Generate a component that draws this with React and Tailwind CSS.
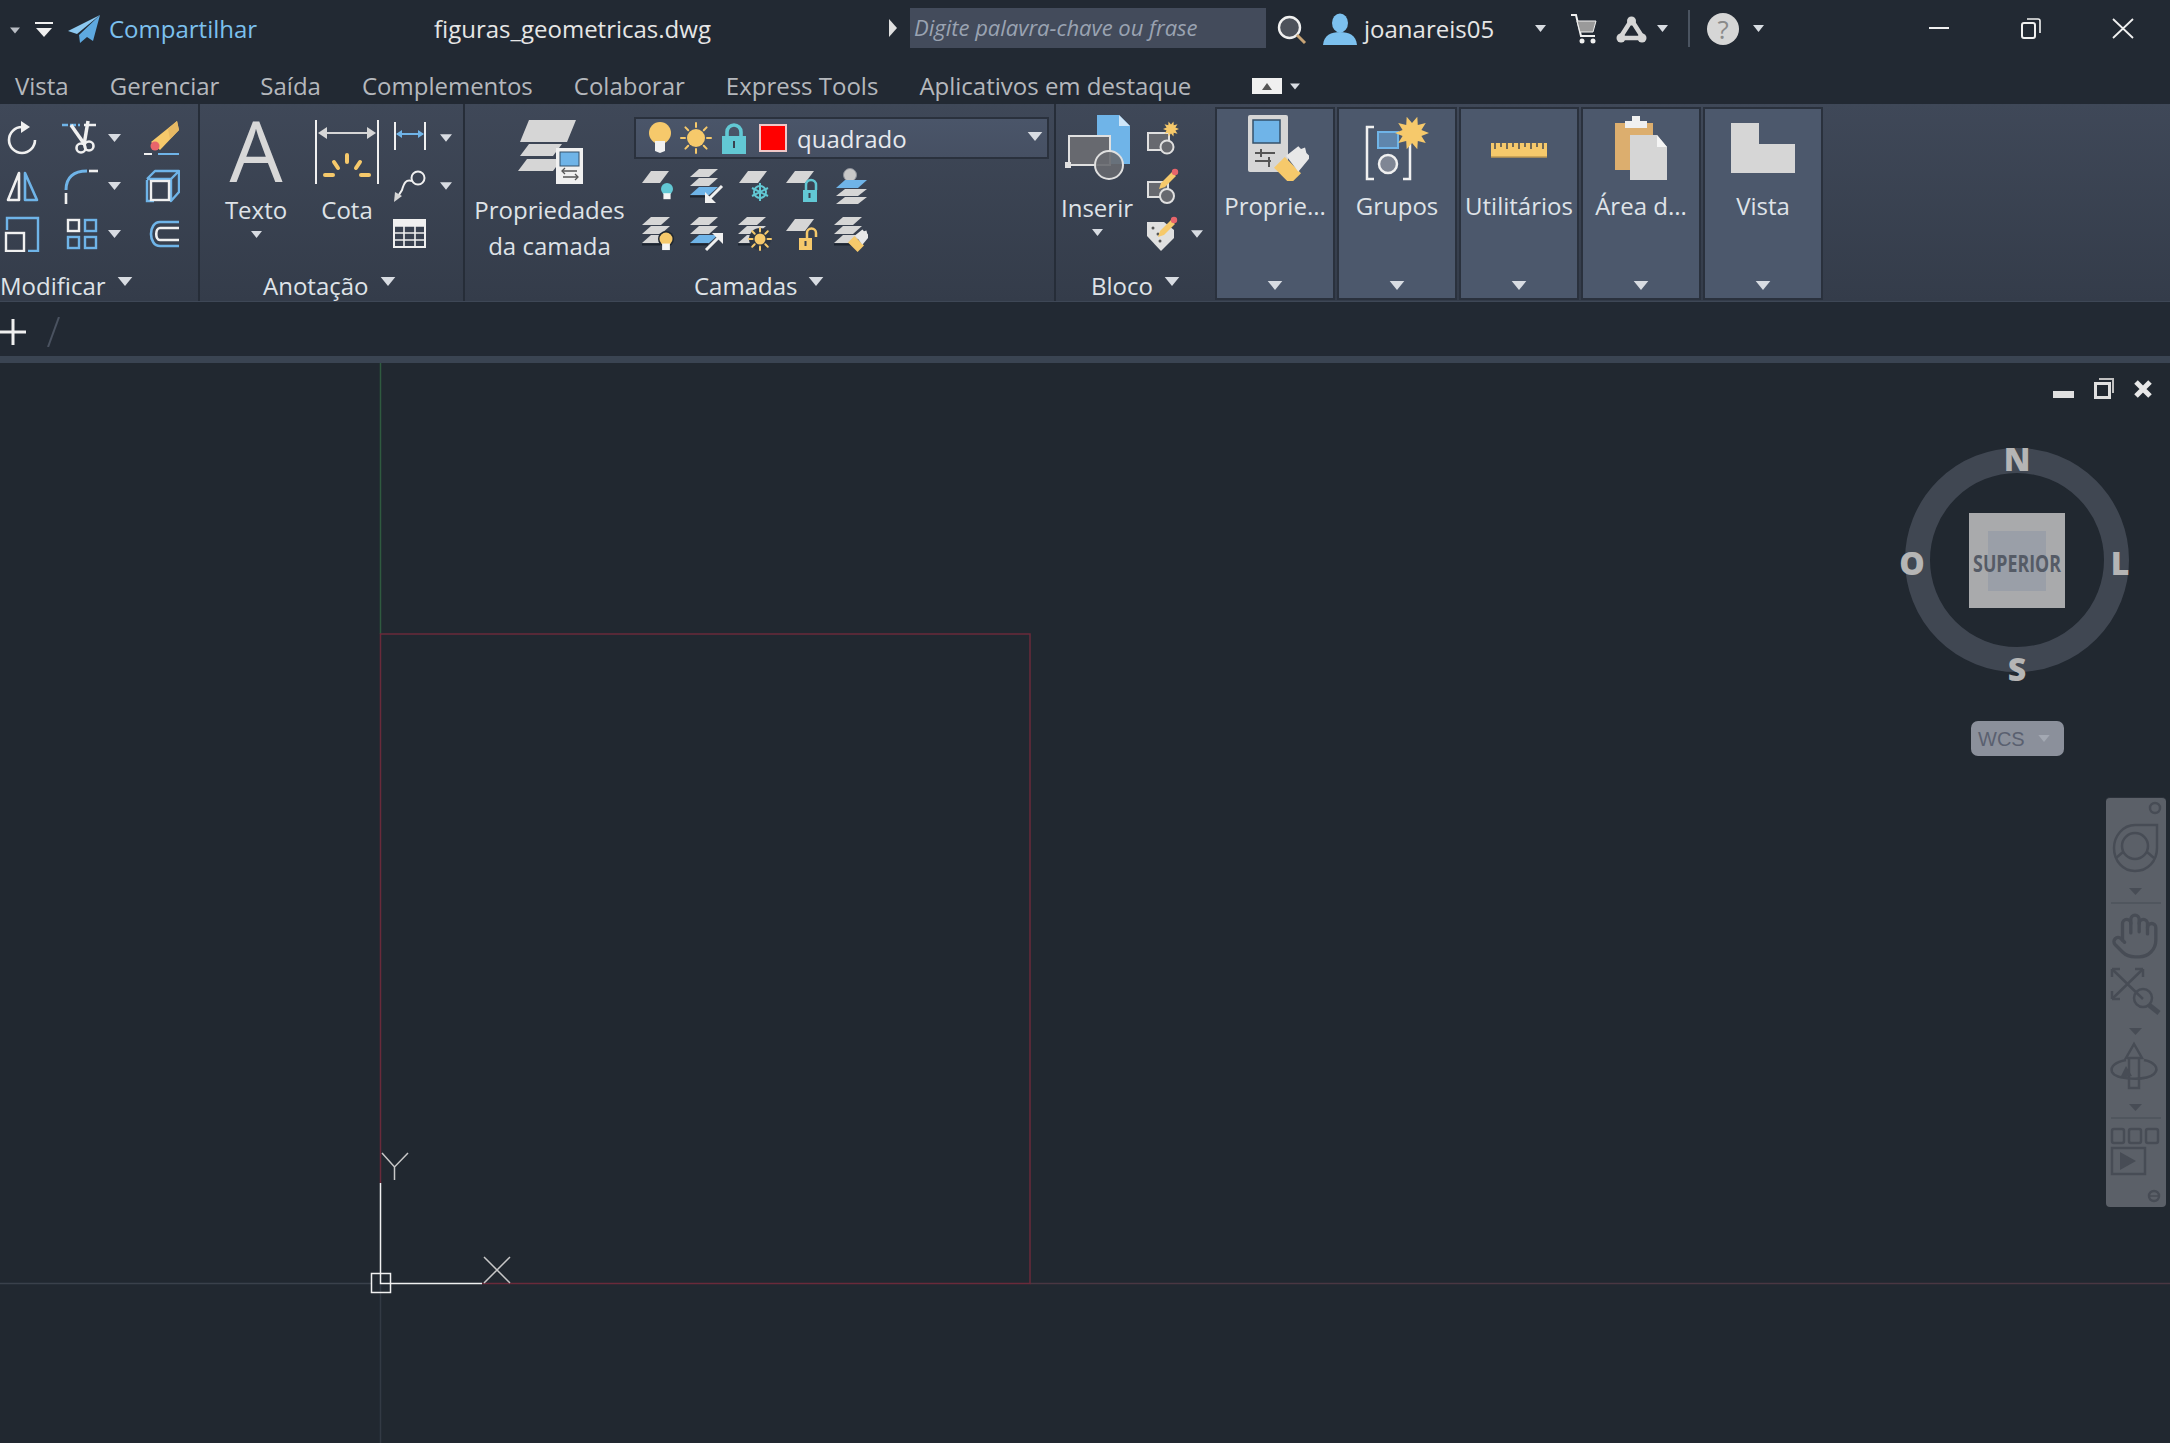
import React from 'react';
import { Hand } from 'lucide-react';

const W = '#f0f0f0', B = '#6fb4e8', G = '#d6d6d6', Y = '#f6c96b', T = '#62c8d4';

const Sv = ({ w = 36, h = w, children }) => (
  <svg width={w} height={h} viewBox={`0 0 ${w} ${h}`} fill="none" className="block shrink-0">{children}</svg>
);
const Caret = ({ w = 13, h = 8, c = '#d8dce2' }) => (
  <svg width={w} height={h} viewBox="0 0 13 8" className="block shrink-0"><path d="M0 0H13L6.5 8Z" fill={c} /></svg>
);
const Plane = ({ x = 0, y = 0, w = 26, h = 11, f = G }) => (
  <path d={`M${x + 9} ${y}H${x + w}L${x + w - 9} ${y + h}H${x}Z`} fill={f} />
);
const Stack = ({ x = 2, blue = false }) => (
  <g>
    <Plane x={x} y={1} w={28} h={8} />
    <Plane x={x} y={10} w={28} h={8} />
    <Plane x={x} y={19} w={28} h={8} f={blue ? B : G} />
    <path d={`M${x} 28.5H${x + 18}`} stroke="#1d2530" strokeWidth="2" />
  </g>
);
const Bulb = ({ x, y, r = 6, f = T }) => (
  <g>
    <circle cx={x} cy={y} r={r} fill={f} />
    <path d={`M${x - r * 0.6} ${y + r * 0.7}H${x + r * 0.6}V${y + r * 1.7}H${x - r * 0.6}Z`} fill="#f4f4f4" />
  </g>
);
const Lock = ({ x, y, f = T, open = false }) => (
  <g>
    <path d={open ? `M${x + 8} ${y}V${y - 5}a4.5 4.5 0 0 1 9 0V${y - 1}` : `M${x + 3} ${y}V${y - 5}a5 5 0 0 1 10 0V${y}`} stroke={f} strokeWidth="2.5" fill="none" />
    <rect x={x} y={y} width={open ? 13 : 14} height={12} fill={f} />
    <rect x={x + 5.5} y={y + 3} width={2} height={5} fill="#39414f" />
  </g>
);
const Sun = ({ x, y, r = 7, rays = 11 }) => (
  <g stroke={Y} strokeWidth="2" strokeLinecap="round">
    {[0, 45, 90, 135, 180, 225, 270, 315].map((a) => {
      const c = Math.cos((a * Math.PI) / 180), s = Math.sin((a * Math.PI) / 180);
      return <line key={a} x1={x + c * (r + 2)} y1={y + s * (r + 2)} x2={x + c * rays} y2={y + s * rays} />;
    })}
    <circle cx={x} cy={y} r={r} fill={Y} stroke="none" />
  </g>
);
const Brush = ({ x = 0, y = 0, s = 1 }) => (
  <g transform={`translate(${x} ${y}) scale(${s})`}>
    <path d="M0 8L8 0L20 12L12 20Z" fill={Y} />
    <path d="M9 -1L18 -8L20 -6L23 -7L24 -3L27 0L18 11Z" fill="#e8e8e8" />
  </g>
);
const Pencil = ({ x = 0, y = 0 }) => (
  <g transform={`translate(${x} ${y})`}>
    <path d="M0 14L11 3L15 7L4 18L-2 20Z" fill={Y} />
    <circle cx="14" cy="3" r="3.2" fill="#e8656b" />
  </g>
);
const Burst = ({ x, y, r = 16, f = Y }) => {
  const pts = [];
  for (let i = 0; i < 20; i++) {
    const a = (i * Math.PI) / 10, q = i % 2 ? r * 0.58 : r;
    pts.push(`${(x + Math.cos(a) * q).toFixed(1)},${(y + Math.sin(a) * q).toFixed(1)}`);
  }
  return <polygon points={pts.join(' ')} fill={f} />;
};

/* Modificar */
const IRotate = () => (
  <Sv><path d="M18 7A13 13 0 1 0 31 20" stroke={W} strokeWidth="2.6" /><path d="M17 1L26 7L17 13Z" fill={W} /></Sv>
);
const ITrim = () => (
  <Sv>
    <path d="M0 5H18" stroke={B} strokeWidth="2.5" strokeDasharray="6 2" /><path d="M22 5H34" stroke={W} strokeWidth="2.5" />
    <path d="M9 5L23 25" stroke={W} strokeWidth="3.5" /><path d="M26 1L22 25" stroke={W} strokeWidth="3.5" />
    <circle cx="19" cy="28" r="4.5" stroke={W} strokeWidth="2.6" /><circle cx="27" cy="26" r="4.5" stroke={W} strokeWidth="2.6" />
  </Sv>
);
const IErase = () => (
  <Sv>
    <path d="M33 1L35 10L16 30L7 22Z" fill={Y} /><path d="M33 1L35 10L26 19L24 9Z" fill="#e7b964" />
    <circle cx="11" cy="26" r="4.5" fill="#e8656b" />
    <path d="M0 34H8" stroke={W} strokeWidth="2" /><path d="M14 34H35" stroke={B} strokeWidth="2" />
  </Sv>
);
const IMirror = () => (
  <Sv><path d="M15 5V32H4Z" stroke={W} strokeWidth="2.6" strokeLinejoin="round" /><path d="M21 5V32H33Z" stroke={B} strokeWidth="2.6" strokeLinejoin="round" /></Sv>
);
const IFillet = () => (
  <Sv><path d="M4 22C4 9 12 3 25 3" stroke={B} strokeWidth="3" /><path d="M27 3H36" stroke={W} strokeWidth="2.6" /><path d="M4 25V36" stroke={W} strokeWidth="2.6" /></Sv>
);
const IBox = () => (
  <Sv>
    <path d="M3 12V33H10" stroke={B} strokeWidth="2.4" /><path d="M3 11L11 3H35V24L27 33V11H3M27 11L35 3" stroke={B} strokeWidth="2.4" strokeLinejoin="round" />
    <rect x="7" y="13" width="18" height="19" stroke={W} strokeWidth="2.4" />
  </Sv>
);
const IScale = () => (
  <Sv>
    <path d="M3 14V2H34V35H24" stroke={B} strokeWidth="2.4" />
    <rect x="2" y="17" width="18" height="18" stroke={W} strokeWidth="2.4" />
  </Sv>
);
const IArray = () => (
  <Sv>
    <rect x="6" y="4" width="11" height="11" stroke={W} strokeWidth="2.4" /><rect x="23" y="4" width="11" height="11" stroke={B} strokeWidth="2.4" />
    <rect x="6" y="21" width="11" height="11" stroke={B} strokeWidth="2.4" /><rect x="23" y="21" width="11" height="11" stroke={B} strokeWidth="2.4" />
  </Sv>
);
const IOffset = () => (
  <Sv>
    <path d="M35 6H16C4 6 4 30 16 30H35" stroke={B} strokeWidth="2.6" />
    <path d="M35 12H16C11 12 11 24 16 24H35" stroke={W} strokeWidth="2.6" />
  </Sv>
);

/* Anotação */
const ICota = () => (
  <Sv w={64} h={68}>
    <path d="M1 4V68M63 4V68" stroke={W} strokeWidth="2" />
    <path d="M5 17H59" stroke={G} strokeWidth="2.2" /><path d="M3 17L12 11V23Z" fill={G} /><path d="M61 17L52 11V23Z" fill={G} />
    <g stroke={Y} strokeWidth="4" strokeLinecap="round">
      <path d="M32 39V46" /><path d="M19 46L23 52" /><path d="M45 46L41 52" /><path d="M10 59H18" /><path d="M54 59H46" />
    </g>
  </Sv>
);
const IDim = () => (
  <Sv><path d="M3 2V30M33 2V30" stroke={W} strokeWidth="2" /><path d="M5 14H31" stroke={B} strokeWidth="2" /><path d="M4 14L10 10V18Z" fill={B} /><path d="M32 14L26 10V18Z" fill={B} /></Sv>
);
const ILeader = () => (
  <Sv><circle cx="26" cy="10" r="6.5" stroke={W} strokeWidth="2" /><path d="M20 13C14 11 12 15 10 22L5 30" stroke={W} strokeWidth="2" /><path d="M2 34L3 24L10 28Z" fill={G} /></Sv>
);
const ITable = () => (
  <Sv><rect x="2" y="4" width="31" height="27" stroke={W} strokeWidth="2" /><path d="M2 10H33M2 17H33M2 24H33M12 10V31M23 10V31" stroke={W} strokeWidth="1.6" /><path d="M2 4H33V10H2Z" fill={W} /></Sv>
);
const IProps = () => (
  <Sv w={68} h={68}>
    <Plane x={4} y={4} w={56} h={22} />
    <Plane x={4} y={28} w={42} h={12} />
    <Plane x={2} y={43} w={44} h={12} />
    <rect x="40" y="32" width="27" height="36" fill="#f0f0f0" />
    <rect x="44" y="36" width="19" height="14" fill={B} stroke="#34506a" strokeWidth="1" />
    <path d="M47 55H61M47 61H61" stroke="#555" strokeWidth="1.6" /><path d="M49 52L46 55L49 58M59 58L62 61L59 64" stroke="#555" strokeWidth="1.3" fill="none" />
  </Sv>
);

/* Camadas */
const L = {
  a: () => <Sv><Plane x={2} y={3} w={27} h={12} /><Bulb x={27} y={21} /></Sv>,
  b: () => <Sv><Stack x={2} blue /><path d="M34 18L20 32" stroke={W} strokeWidth="3" /><path d="M17 35V24L28 35Z" fill={W} /></Sv>,
  c: () => <Sv><Plane x={3} y={3} w={28} h={12} /><g stroke={T} strokeWidth="2"><circle cx="24" cy="24" r="6" /><path d="M24 15V33M16 20L32 28M16 28L32 20" /></g></Sv>,
  d: () => <Sv><Plane x={2} y={3} w={28} h={12} /><Lock x={19} y={22} /></Sv>,
  e: () => <Sv><circle cx="18" cy="7" r="6.5" fill="#c8c8c8" stroke="#8a8f98" /><Plane x={4} y={12} w={31} h={8} f={B} /><Plane x={4} y={21} w={31} h={7} /><Plane x={4} y={29} w={31} h={7} /></Sv>,
  f: () => <Sv><Stack x={2} /><circle cx="26" cy="23" r="8" fill="#1f2630" /><Bulb x={26} y={23} r={6.5} f={Y} /></Sv>,
  g: () => <Sv><Stack x={2} blue /><path d="M18 34L31 21" stroke={W} strokeWidth="3" /><path d="M35 17V28L24 17Z" fill={W} /></Sv>,
  h: () => <Sv><Stack x={2} /><circle cx="24" cy="23" r="11" fill="#2e3642" /><Sun x={24} y={23} r={5.5} rays={11} /></Sv>,
  i: () => <Sv><Plane x={2} y={3} w={28} h={12} /><Lock x={15} y={22} f={Y} open /></Sv>,
  j: () => <Sv><Stack x={2} /><Brush x={16} y={20} s={0.8} /></Sv>,
};

/* Bloco */
const IInsert = () => (
  <Sv w={72} h={72}>
    <path d="M36 3H58L69 14V52H36Z" fill={B} /><path d="M58 3L69 14H58Z" fill="#cfe6f8" />
    <rect x="8" y="24" width="41" height="29" fill="#67696f" stroke="#e0e0e0" strokeWidth="2" />
    <circle cx="48" cy="53" r="14" fill="#67696f" fillOpacity="0.9" stroke="#e0e0e0" strokeWidth="2" />
    <rect x="4" y="50" width="6" height="6" fill="#e0e0e0" />
  </Sv>
);
const IB1 = () => (
  <Sv><rect x="4" y="13" width="21" height="17" fill="#67696f" stroke="#e0e0e0" strokeWidth="2" /><circle cx="23" cy="27" r="6.5" fill="#67696f" stroke="#e0e0e0" strokeWidth="2" /><Burst x={27} y={9} r={8} /></Sv>
);
const IB2 = () => (
  <Sv><rect x="4" y="14" width="20" height="15" fill="#67696f" stroke="#e0e0e0" strokeWidth="2" /><circle cx="23" cy="28" r="7" fill="#67696f" stroke="#e0e0e0" strokeWidth="2" /><Pencil x={17} y={1} /></Sv>
);
const IB3 = () => (
  <Sv><path d="M3 6H20L30 14V22L17 35L3 20Z" fill="#e0e0e0" /><circle cx="9" cy="12" r="1.5" fill="#555" /><circle cx="14" cy="18" r="1.5" fill="#555" /><circle cx="16" cy="25" r="1.5" fill="#555" /><Pencil x={16} y={1} /></Sv>
);

/* slide-outs */
const SProps = () => (
  <Sv w={68} h={68}>
    <rect x="7" y="2" width="40" height="57" rx="2" fill={G} />
    <rect x="12" y="7" width="27" height="23" fill={B} stroke="#34506a" strokeWidth="1.5" />
    <path d="M14 40H34M14 48H30M20 36V44M28 44V54" stroke="#555" strokeWidth="2" />
    <Brush x={33} y={44} s={1.35} />
  </Sv>
);
const SGroups = () => (
  <Sv w={68} h={68}>
    <path d="M11 14H4V66H11M40 66H47V14" stroke={W} strokeWidth="2.5" />
    <rect x="15" y="19" width="20" height="16" fill="#5f86ad" stroke={B} strokeWidth="2" />
    <circle cx="25" cy="51" r="9" fill="#7f8694" stroke={W} strokeWidth="2.5" />
    <Burst x={49} y={20} r={17} />
  </Sv>
);
const SRuler = () => (
  <Sv w={68} h={68}>
    <path d="M6 30V44H62V30Z" fill={Y} />
    <path d="M10 30V36M16 30V34M22 30V36M28 30V34M34 30V36M40 30V34M46 30V36M52 30V34M58 30V36" stroke="#39414f" strokeWidth="1.4" />
    <path d="M6 44H62" stroke="#bf9950" strokeWidth="1.5" />
  </Sv>
);
const SClip = () => (
  <Sv w={68} h={68}>
    <rect x="8" y="10" width="38" height="47" fill="#dcae6e" />
    <rect x="18" y="8" width="22" height="7" fill="#f0f0f0" /><rect x="25" y="3" width="8" height="6" fill="#f0f0f0" />
    <path d="M23 22H50L60 34V67H23Z" fill={G} /><path d="M50 22L60 34H50Z" fill="#f4f4f4" />
  </Sv>
);
const SView = () => (
  <Sv w={68} h={68}><path d="M2 10H30V31H66V60H2Z" fill={G} /></Sv>
);

const Big = ({ label, icon, caret, top = 'pt-[12px]', mt = 'mt-[11px]', className = '', lh = 'leading-[30px]' }) => (
  <div className={`flex flex-col items-center ${top} ${className}`}>
    {icon}
    <div className={`${mt} ${lh} text-center whitespace-nowrap text-[#dfe3e8]`}>{label}</div>
    {caret && <div className="mt-[6px]"><Caret w={11} h={7} /></div>}
  </div>
);

const Footer = ({ name, ml }) => (
  <div className={`h-[30px] pb-[1px] flex items-center ${ml}`}>
    <span className="whitespace-nowrap text-[#dfe3e8]">{name}</span>
    <span className="ml-[11px] mb-[8px]"><Caret w={16} h={9} /></span>
  </div>
);

const Slide = ({ label, icon }) => (
  <div className="w-[120px] mt-[3px] mb-[1px] border-2 border-[#2a313d] bg-[#4c586c] flex flex-col items-center pt-[4px]">
    {icon}
    <div className="mt-[10px] leading-[30px] whitespace-nowrap text-[#dfe3e8]">{label}</div>
    <div className="mt-auto mb-[8px]"><Caret w={16} h={9} /></div>
  </div>
);

const Row3 = ({ a, b, c }) => (
  <div className="h-[48px] flex items-center">
    <div className="ml-[4px]">{a}</div>
    <div className="ml-[22px]">{b}</div>
    <div className="ml-[10px]"><Caret /></div>
    <div className="ml-[23px]">{c}</div>
  </div>
);

const Menu = ['Vista', 'Gerenciar', 'Saída', 'Complementos', 'Colaborar', 'Express Tools', 'Aplicativos em destaque'];

export default function App() {
  return (
    <div className="w-[2170px] h-[1443px] overflow-hidden relative bg-[#212830] flex flex-col font-['Open_Sans',sans-serif] text-[24px]">
      {/* title bar */}
      <div className="h-[60px] shrink-0 bg-[#222933] flex items-center">
        <div className="ml-[10px]"><Caret w={10} h={7} c="#b9bdc4" /></div>
        <div className="ml-[15px]">
          <Sv w={18} h={16}><path d="M0 1H18" stroke={W} strokeWidth="2" /><path d="M1 6H17L9 15Z" fill={W} /></Sv>
        </div>
        <div className="ml-[15px]">
          <Sv w={32} h={30}><path d="M32 0L0 16L9 19Z" fill="#8cc8f0" /><path d="M32 0L11 20L12 28L19 22L25 26Z" fill="#5ea9e0" /></Sv>
        </div>
        <span className="ml-[9px] w-[149px] -mt-[2px] whitespace-nowrap text-[#7cc0ee]">Compartilhar</span>
        <span className="ml-[176px] w-[281px] -mt-[2px] whitespace-nowrap text-[#e6e6e6]">figuras_geometricas.dwg</span>
        <div className="ml-[173px] -mt-[4px]"><Sv w={10} h={18}><path d="M1 0L9 9L1 18Z" fill="#e0e0e0" /></Sv></div>
        <div className="ml-[12px] -mt-[4px] w-[356px] h-[40px] bg-[#434b5b] flex items-center pl-[4px]">
          <span className="italic text-[22px] -mt-[2px] text-[#9aa3b2] whitespace-nowrap">Digite palavra-chave ou frase</span>
        </div>
        <div className="ml-[11px]">
          <Sv w={30} h={30}><circle cx="12.5" cy="12.5" r="10.5" fill="#4d525b" stroke={W} strokeWidth="2.4" /><path d="M20 20L28 28" stroke="#c8a476" strokeWidth="3" /></Sv>
        </div>
        <div className="ml-[16px] -mt-[2px]">
          <Sv w={34} h={32}><ellipse cx="17" cy="10" rx="8" ry="9.5" fill="#7cc0ee" /><path d="M0 32C1 22 8 19 17 19C26 19 33 22 34 32Z" fill="#7cc0ee" /></Sv>
        </div>
        <span className="ml-[7px] w-[132px] -mt-[2px] whitespace-nowrap text-[#e6e6e6]">joanareis05</span>
        <div className="ml-[39px] -mt-[4px]"><Caret w={11} h={7} /></div>
        <div className="ml-[25px] -mt-[2px]">
          <Sv w={26} h={30}><path d="M0 1H5L10 22H24" stroke={W} strokeWidth="2" /><path d="M6 7H25L22 18H9Z" fill="#9a9a9a" stroke={W} strokeWidth="1" /><circle cx="11" cy="27" r="2.5" fill={W} /><circle cx="22" cy="27" r="2.5" fill={W} /></Sv>
        </div>
        <div className="ml-[19px] -mt-[2px]">
          <Sv w={31} h={28}><path d="M15.5 5L27 23H4Z" stroke={G} strokeWidth="4.5" strokeLinejoin="round" /><circle cx="15.5" cy="6" r="4.5" fill={G} /><circle cx="5" cy="23" r="4.5" fill={G} /><circle cx="26" cy="23" r="4.5" fill={G} /></Sv>
        </div>
        <div className="ml-[10px] -mt-[4px]"><Caret w={11} h={7} /></div>
        <div className="ml-[20px] -mt-[4px] w-[2px] h-[37px] bg-[#4b5461]" />
        <div className="ml-[17px] -mt-[2px] w-[32px] h-[32px] rounded-full bg-[#d6d6d6] flex items-center justify-center text-[26px] leading-none text-[#8a8a8a]">?</div>
        <div className="ml-[14px] -mt-[4px]"><Caret w={11} h={7} /></div>
        <div className="ml-[165px] -mt-[4px] w-[20px] h-[2px] bg-[#f0f0f0]" />
        <div className="ml-[72px] -mt-[4px]">
          <Sv w={20} h={21}><rect x="1" y="5" width="13" height="15" rx="2" stroke={W} strokeWidth="2" /><path d="M6 1H17C18 1 19 2 19 3V15" stroke={W} strokeWidth="1.6" /></Sv>
        </div>
        <div className="ml-[71px] -mt-[4px]">
          <Sv w={22} h={21}><path d="M1 1L21 20M21 1L1 20" stroke={W} strokeWidth="1.8" /></Sv>
        </div>
      </div>

      {/* tabs */}
      <div className="h-[44px] shrink-0 bg-[#222933] pt-[8px] pl-[15px] flex items-center gap-[41px] text-[#b5b8bd] whitespace-nowrap">
        {Menu.map((m) => <span key={m}>{m}</span>)}
        <div className="ml-[20px] flex items-center">
          <div className="w-[30px] h-[16px] bg-[#f0f0f0] flex items-center justify-center"><svg width="10" height="7" viewBox="0 0 10 7"><path d="M5 0L10 7H0Z" fill="#555" /></svg></div>
          <div className="ml-[8px]"><Caret w={10} h={7} /></div>
        </div>
      </div>

      {/* ribbon */}
      <div className="h-[198px] shrink-0 flex bg-linear-to-b from-[#3f4858] to-[#343c4a] border-b border-[#3e4756]">
        {/* Modificar */}
        <div className="w-[200px] shrink-0 border-r-2 border-[#262d38] flex flex-col">
          <div className="h-[168px] pt-[10px]">
            <Row3 a={<IRotate />} b={<ITrim />} c={<IErase />} />
            <Row3 a={<IMirror />} b={<IFillet />} c={<IBox />} />
            <Row3 a={<IScale />} b={<IArray />} c={<IOffset />} />
          </div>
          <Footer name="Modificar" ml="ml-0" />
        </div>
        {/* Anotação */}
        <div className="w-[265px] shrink-0 border-r-2 border-[#262d38] flex flex-col">
          <div className="h-[168px] flex">
            <Big className="w-[102px] ml-[5px]" caret label="Texto" icon={<span className="block h-[68px] text-[84px] leading-[68px] font-medium text-[#d8d8d8]">A</span>} />
            <Big className="w-[80px]" label="Cota" icon={<ICota />} />
            <div className="ml-[5px] pt-[10px]">
              <div className="h-[48px] flex items-center"><IDim /><div className="ml-[12px]"><Caret w={12} h={8} /></div></div>
              <div className="h-[48px] flex items-center"><ILeader /><div className="ml-[12px]"><Caret w={12} h={8} /></div></div>
              <div className="h-[48px] flex items-center"><ITable /></div>
            </div>
          </div>
          <Footer name="Anotação" ml="ml-[63px]" />
        </div>
        {/* Camadas */}
        <div className="w-[591px] shrink-0 border-r-2 border-[#262d38] flex flex-col">
          <div className="h-[168px] flex">
            <Big className="w-[169px]" label={<>Propriedades<br />da camada</>} mt="mt-[8px]" lh="leading-[36px]" icon={<IProps />} />
            <div className="w-[415px] pt-[13px]">
              <div className="h-[42px] bg-linear-to-b from-[#4a5569] to-[#465063] border-2 border-[#2a313d] flex items-center">
                <div className="ml-[12px]"><Sv w={24} h={32}><circle cx="12" cy="11" r="11" fill={Y} /><path d="M7 19H17V29L12 31L7 29Z" fill="#f0f0f0" /></Sv></div>
                <div className="ml-[8px]"><Sv w={32} h={32}><Sun x={16} y={16} r={9} rays={15} /></Sv></div>
                <div className="ml-[10px]"><Sv w={24} h={32}><path d="M5 15V10a7 7 0 0 1 14 0V15" stroke={T} strokeWidth="3.6" fill="none" /><rect x="0" y="14" width="24" height="18" fill={T} /><rect x="11" y="19" width="2" height="7" fill="#39414f" /></Sv></div>
                <div className="ml-[13px] w-[28px] h-[28px] bg-[#ff0000] border-2 border-[#f0c8c8]" />
                <span className="ml-[10px] mt-[2px] text-[#e6e9ee] whitespace-nowrap">quadrado</span>
                <div className="ml-auto mr-[4px] -mt-[4px]"><Caret w={16} h={9} /></div>
              </div>
              <div className="mt-[3px] grid grid-cols-[repeat(5,48px)] grid-rows-[48px_48px] place-items-center">
                <L.a /><L.b /><L.c /><L.d /><L.e />
                <L.f /><L.g /><L.h /><L.i /><L.j />
              </div>
            </div>
          </div>
          <Footer name="Camadas" ml="ml-[229px]" />
        </div>
        {/* Bloco */}
        <div className="w-[159px] shrink-0 flex flex-col">
          <div className="h-[168px] flex">
            <Big className="w-[74px] ml-[4px]" caret top="pt-[8px]" mt="mt-[9px]" label="Inserir" icon={<IInsert />} />
            <div className="ml-[10px] pt-[10px]">
              <div className="h-[48px] flex items-center"><IB1 /></div>
              <div className="h-[48px] flex items-center"><IB2 /></div>
              <div className="h-[48px] flex items-center"><IB3 /><div className="ml-[11px]"><Caret w={12} h={8} /></div></div>
            </div>
          </div>
          <Footer name="Bloco" ml="ml-[35px]" />
        </div>
        {/* slide-outs */}
        <div className="flex gap-[2px] h-full">
          <Slide label="Proprie..." icon={<SProps />} />
          <Slide label="Grupos" icon={<SGroups />} />
          <Slide label="Utilitários" icon={<SRuler />} />
          <Slide label="Área d..." icon={<SClip />} />
          <Slide label="Vista" icon={<SView />} />
        </div>
      </div>

      {/* file tab bar */}
      <div className="h-[54px] shrink-0 bg-[#222933] flex items-center pt-[6px]">
        <Sv w={28} h={30}><path d="M0 15H26M13 2V28" stroke={W} strokeWidth="3" /></Sv>
        <div className="ml-[18px]"><Sv w={14} h={30}><path d="M13 0L2 30" stroke="#4a5260" strokeWidth="2" /></Sv></div>
      </div>
      <div className="h-[7px] shrink-0 bg-[#3a4452]" />

      {/* drawing canvas */}
      <div className="relative flex-1 bg-[#212830]">
        <svg width="2170" height="1080" viewBox="0 0 2170 1080" fill="none" className="absolute inset-0 block">
          <path d="M380.5 0V271" stroke="#2f5a3f" strokeWidth="1.5" />
          <path d="M380.5 920V1080" stroke="#333a44" strokeWidth="1.5" />
          <path d="M0 920.5H372" stroke="#3a414b" strokeWidth="1.5" />
          <path d="M1030 920.5H2170" stroke="#4a3742" strokeWidth="1.5" />
          <path d="M380.5 820V271H1030V920.5H482" stroke="#6a2a3a" strokeWidth="1.5" />
          <path d="M380.5 820V920.5H482" stroke={W} strokeWidth="1.5" />
          <rect x="371.5" y="910.5" width="19" height="19" stroke={W} strokeWidth="1.5" />
          <path d="M382 790L394.5 804L408 790M394.5 804V817" stroke="#c8c8c8" strokeWidth="1.5" />
          <path d="M484 894L510 920M510 894L484 920" stroke="#c8c8c8" strokeWidth="1.5" />
        </svg>

        {/* viewport controls */}
        <div className="absolute left-[2053px] top-[15px] flex items-center">
          <div className="w-[21px] h-[7px] mt-[12px] bg-[#e0e0e0]" />
          <div className="ml-[20px]"><Sv w={20} h={21}><rect x="1.5" y="5.5" width="14" height="14" stroke="#e0e0e0" strokeWidth="3" /><path d="M5 1H19V15" stroke="#c0c0c0" strokeWidth="2" /></Sv></div>
          <div className="ml-[19px]"><Sv w={20} h={20}><path d="M3 3L17 17M17 3L3 17" stroke="#e8e8e8" strokeWidth="5" /></Sv></div>
        </div>

        {/* view cube */}
        <div className="absolute left-[1905px] top-[85px] w-[224px] h-[224px] rounded-full border-[25px] border-[#404752]" />
        <div className="absolute left-[1969px] top-[150px] w-[96px] h-[95px] bg-[#a9aaac] flex items-center justify-center">
          <div className="w-[58px] h-[60px] bg-[#9a9fa8]" />
        </div>
        <span className="absolute left-[1969px] top-[150px] w-[96px] h-[95px] pt-[4px] flex items-center justify-center font-bold text-[24px] scale-x-[0.74] text-[#555b66] whitespace-nowrap">SUPERIOR</span>
        <span className="absolute left-[1997px] top-[76px] w-[40px] text-center font-extrabold text-[32px] leading-[40px] text-[#b5b5b5]">N</span>
        <span className="absolute left-[1997px] top-[286px] w-[40px] text-center font-extrabold text-[32px] leading-[40px] text-[#b5b5b5]">S</span>
        <span className="absolute left-[1892px] top-[180px] w-[40px] text-center font-extrabold text-[32px] leading-[40px] text-[#b5b5b5]">O</span>
        <span className="absolute left-[2100px] top-[180px] w-[40px] text-center font-extrabold text-[32px] leading-[40px] text-[#b5b5b5]">L</span>
        <div className="absolute left-[1971px] top-[358px] w-[93px] h-[35px] rounded-[7px] bg-[#8b909b] flex items-center pl-[7px]">
          <span className="font-['Liberation_Sans'] text-[20px] text-[#5a6070]">WCS</span>
          <div className="ml-[12px]"><Caret w={14} h={7} c="#a3a8b2" /></div>
        </div>

        {/* navigation bar */}
        <div className="absolute left-[2106px] top-[434px] w-[60px] h-[410px] rounded-[4px] bg-[#5b6068] border-t border-[#2b313a]">
          <svg width="60" height="410" viewBox="0 0 60 410" fill="none" className="absolute inset-0" stroke="#474c55" strokeWidth="2.5">
            <circle cx="49" cy="10" r="5" />
            <path d="M29 27C17 27 8 38 8 50C8 63 17 73 29 73C42 73 51 63 51 50V27Z" />
            <circle cx="29" cy="48" r="13" />
            <path d="M10 60L17 54M48 60L41 54" />
            <path d="M23 90H36L29.5 97Z" fill="#474c55" stroke="none" />
            <path d="M5 105H55" strokeWidth="1" />
            <path d="M6 171L37 201M37 171L6 201" />
            <path d="M6 171H14M6 171V179M37 171H29M37 171V179M6 201V193M6 201H14" />
            <circle cx="37" cy="200" r="9" />
            <path d="M43 207L53 215" strokeWidth="5" />
            <path d="M23 230H36L29.5 237Z" fill="#474c55" stroke="none" />
            <path d="M23 260V290H33V260M20 260L28 246L36 260Z" />
            <path d="M20 262C10 264 4 268 6 274C10 282 40 283 48 276C54 270 48 264 38 262" />
            <path d="M20 268L14 280L26 278Z" fill="#474c55" stroke="none" />
            <path d="M23 306H36L29.5 313Z" fill="#474c55" stroke="none" />
            <path d="M5 320H55" strokeWidth="1" />
            <rect x="6" y="331" width="12" height="14" rx="2" /><rect x="23" y="331" width="12" height="14" rx="2" /><rect x="40" y="331" width="12" height="14" rx="2" />
            <rect x="6" y="350" width="33" height="26" />
            <path d="M14 354L30 363L14 372Z" fill="#474c55" stroke="none" />
            <circle cx="48" cy="398" r="5" />
            <path d="M43 398H53" strokeWidth="1.5" />
          </svg>
          <Hand className="absolute left-[4px] top-[113px]" size={50} color="#474c55" strokeWidth={1.6} />
        </div>
      </div>
    </div>
  );
}
